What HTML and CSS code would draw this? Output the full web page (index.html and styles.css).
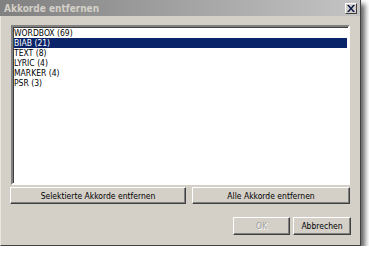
FILE: index.html
```html
<!DOCTYPE html>
<html lang="de">
<head>
    <meta charset="UTF-8">
    <title>Akkorde entfernen</title>
    <link rel="stylesheet" href="styles.css">
</head>
<body>
    <div class="window">
        <div class="titlebar">
            <span class="title">Akkorde entfernen</span>
            <span class="close">
                <svg width="8" height="7" viewBox="0 0 8 7">
                    <path d="M0 0h2l2 2.5L6 0h2L5 3.5 8 7H6L4 4.5 2 7H0l3-3.5z" fill="#0c1a4a"/>
                </svg>
            </span>
        </div>
        <div class="content">
            <ul class="list">
                <li>WORDBOX (69)</li>
                <li class="selected">BIAB (21)</li>
                <li>TEXT (8)</li>
                <li>LYRIC (4)</li>
                <li>MARKER (4)</li>
                <li>PSR (3)</li>
            </ul>
            <div class="actions">
                <button class="btn btn-sel">Selektierte Akkorde entfernen</button>
                <button class="btn btn-all">Alle Akkorde entfernen</button>
            </div>
            <div class="footer">
                <button class="btn btn-ok" disabled>OK</button>
                <button class="btn btn-cancel">Abbrechen</button>
            </div>
        </div>
    </div>
</body>
</html>
```

FILE: styles.css
```css
body {
    margin: 0;
    background-color: #fff;
    font-family: "DejaVu Sans Condensed", "Liberation Sans", sans-serif;
    font-size: 8.5px;
}
.window {
    width: 361px;
    height: 246px;
    box-sizing: border-box;
    background-color: #d4d0c8;
    border-left: 1px solid #e8e6e0;
    border-right: 1px solid #404040;
    border-bottom: 1px solid #404040;
    box-shadow: 4px 4px 5px rgba(0, 0, 0, 0.6);
    display: flex;
    flex-direction: column;
}
.titlebar {
    height: 16px;
    margin-left: -1px;
    background: linear-gradient(to right, #808080, #c4c4c4);
    display: flex;
    align-items: center;
    justify-content: space-between;
    padding: 0 3px 0 4px;
}
.title {
    color: #d4d0c8;
    font-weight: bold;
    font-size: 10px;
}
.close {
    width: 12px;
    height: 11px;
    box-sizing: border-box;
    background-color: #d4d0c8;
    border: 1px solid;
    border-color: #fff #404040 #404040 #fff;
    display: flex;
    align-items: center;
    justify-content: center;
}
.content {
    padding: 9px 10px 0 10px;
}
.list {
    list-style: none;
    margin: 0;
    padding: 1px 0 0 1px;
    height: 160px;
    box-sizing: border-box;
    background-color: #fff;
    border: 2px solid;
    border-color: #808080 #fff #fff #808080;
    box-shadow: inset 1px 1px #404040;
}
.list li {
    height: 10px;
    line-height: 10px;
    padding-left: 0;
    margin-right: 1px;
    color: #000;
}
.list li.selected {
    background-color: #0a246a;
    color: #fff;
}
.actions {
    display: flex;
    gap: 6px;
    margin: 2px 0 0 -1px;
}
.btn {
    height: 17px;
    padding: 0;
    box-sizing: border-box;
    background-color: #d4d0c8;
    border: 1px solid;
    border-color: #fff #404040 #404040 #fff;
    box-shadow: inset -1px -1px #808080;
    font-family: inherit;
    font-size: 8.5px;
    color: #000;
}
.btn-sel {
    width: 176px;
}
.btn-all {
    width: 158px;
}
.footer {
    display: flex;
    justify-content: flex-end;
    gap: 3px;
    margin: 13px -1px 0 0;
}
.footer .btn {
    height: 18px;
}
.btn-ok {
    width: 57px;
    color: #a0a0a0;
    text-shadow: 1px 1px #fff;
}
.btn-cancel {
    width: 58px;
}
```
